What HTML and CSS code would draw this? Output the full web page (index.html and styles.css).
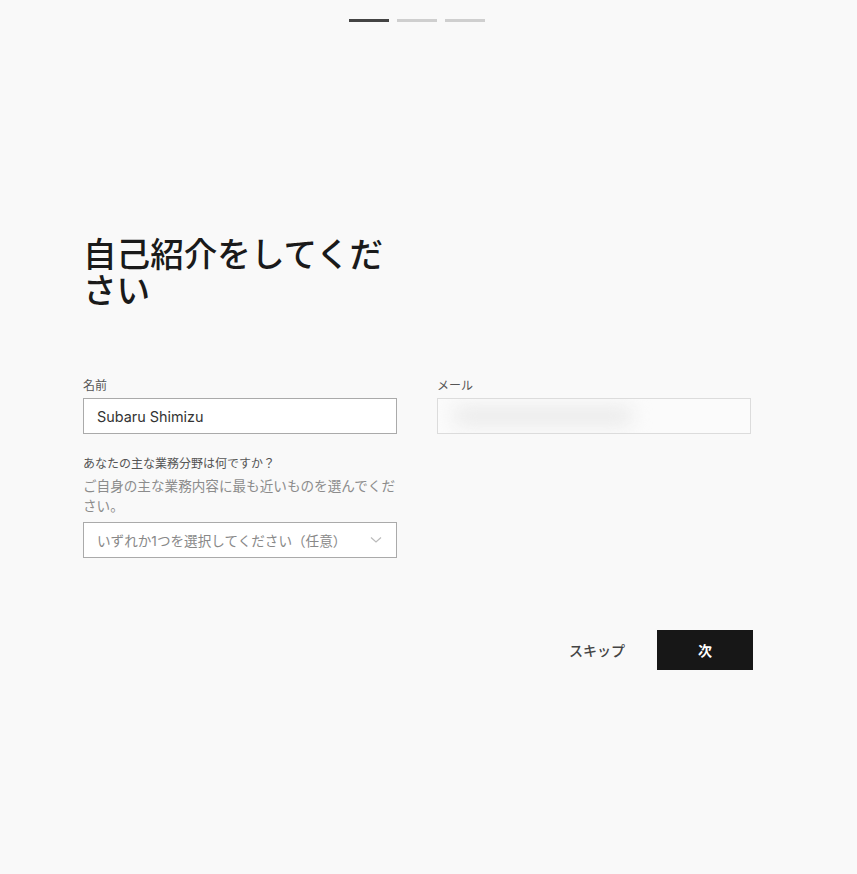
FILE: index.html
```html
<!DOCTYPE html>
<html lang="ja">
<head>
<meta charset="utf-8">
<link rel="stylesheet" href="styles.css">
</head>
<body>
<div class="page">
  <div class="progress">
    <span class="step active"></span>
    <span class="step"></span>
    <span class="step"></span>
  </div>
  <main class="content">
    <h1 class="title">自己紹介をしてください</h1>
    <div class="form">
      <div class="field">
        <label class="label">名前</label>
        <div class="input">Subaru Shimizu</div>
      </div>
      <div class="field">
        <label class="label">メール</label>
        <div class="input input-light"><span class="blur"></span></div>
      </div>
      <div class="field">
        <label class="label label-q">あなたの主な業務分野は何ですか？</label>
        <p class="hint">ご自身の主な業務内容に最も近いものを選んでください。</p>
        <div class="input select">
          <span class="placeholder">いずれか1つを選択してください（任意）</span>
          <svg class="chev" width="12" height="8" viewBox="0 0 12 8"><path d="M1 1.5 L6 6 L11 1.5" fill="none" stroke="#bbb" stroke-width="1.2"/></svg>
        </div>
      </div>
    </div>
    <div class="actions">
      <button class="btn-skip">スキップ</button>
      <button class="btn-next">次</button>
    </div>
  </main>
</div>
</body>
</html>
```
FILE: styles.css
```css
* { box-sizing: border-box; }
html, body { margin: 0; padding: 0; background: #f9f9f9; }
body {
  font-family: Inter, "Noto Sans CJK JP", sans-serif;
  color: #1a1a1a;
  width: 857px;
  height: 874px;
}
.page { padding-top: 19px; }
.progress {
  display: flex;
  gap: 8px;
  justify-content: center;
  padding-right: 24px;
}
.step { width: 40px; height: 3px; background: #cfcfcf; }
.step.active { background: #444; }

.content { padding: 0 104px 0 83px; margin-top: 213px; }
.title {
  margin: 0;
  width: 314px;
  font-size: 33.6px;
  line-height: 36px;
  font-weight: 500;
  color: #1a1a1a;
  font-family: "Noto Sans CJK JP", sans-serif;
}
.form {
  display: grid;
  grid-template-columns: 314px 314px;
  column-gap: 40px;
  row-gap: 22px;
  margin-top: 71px;
}
.field { display: flex; flex-direction: column; }
.label {
  font-size: 12px;
  line-height: 16px;
  color: #555;
  margin-bottom: 4px;
}
.label-q { color: #555; margin-bottom: 4px; }
.hint {
  margin: 0 0 6px;
  font-size: 13.6px;
  line-height: 20px;
  color: #8c8c8c;
}
.input {
  height: 36px;
  border: 1px solid #aaa;
  background: #fff;
  font-size: 14.4px;
  color: #333;
  padding: 0 13px;
  display: flex;
  align-items: center;
}
.input-light { border-color: #dcdcdc; background: #fbfbfb; overflow: hidden; }
.blur {
  display: block;
  width: 180px;
  height: 20px;
  margin-left: 2px;
  background: #ebebeb;
  border-radius: 10px;
  filter: blur(9px);
}
.select { justify-content: space-between; padding-right: 14px; font-size: 13.6px; }
.placeholder { color: #888; }
.chev { display: block; }
.actions {
  display: flex;
  justify-content: flex-end;
  gap: 8px;
  margin-top: 72px;
}
.btn-skip, .btn-next {
  font-family: Inter, "Noto Sans CJK JP", sans-serif;
  font-size: 14px;
  height: 40px;
  border: 0;
  cursor: pointer;
}
.btn-skip { background: transparent; color: #444; padding: 0 24px; font-weight: 500; }
.btn-next { background: #171717; color: #fff; width: 96px; font-weight: 700; }
```
